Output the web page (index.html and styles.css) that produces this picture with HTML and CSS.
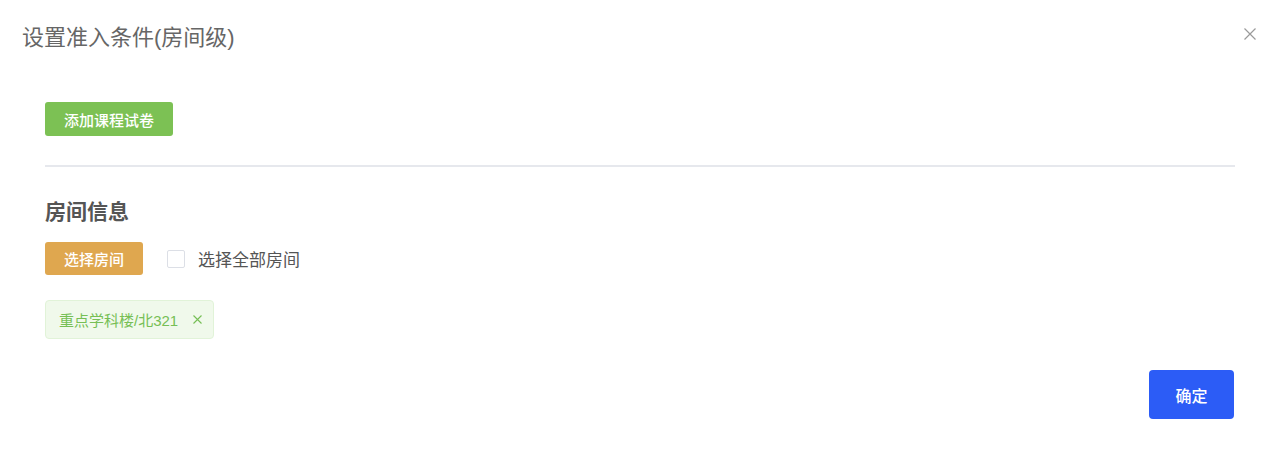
FILE: index.html
```html
<!DOCTYPE html>
<html lang="zh-CN">
<head>
    <meta charset="UTF-8">
    <meta name="viewport" content="width=device-width, initial-scale=1.0">
    <title>设置准入条件</title>
    <link rel="stylesheet" href="styles.css">
</head>
<body>
    <div class="dialog">
        <div class="dialog-header">
            <span class="dialog-title">设置准入条件(房间级)</span>
            <button class="dialog-close" aria-label="关闭">
                <svg width="12" height="12" viewBox="0 0 12 12">
                    <path d="M0.5 0.5 L11.5 11.5 M11.5 0.5 L0.5 11.5" stroke="#9a9a9a" stroke-width="1.2" fill="none"/>
                </svg>
            </button>
        </div>

        <div class="dialog-body">
            <button class="btn btn-green">添加课程试卷</button>
            <div class="divider"></div>

            <h3 class="section-title">房间信息</h3>
            <div class="room-actions">
                <button class="btn btn-orange">选择房间</button>
                <label class="check">
                    <span class="check-box"></span>
                    <span class="check-label">选择全部房间</span>
                </label>
            </div>

            <div class="tags">
                <span class="tag">
                    重点学科楼/北321
                    <svg class="tag-close" width="9" height="9" viewBox="0 0 9 9">
                        <path d="M0.5 0.5 L8.5 8.5 M8.5 0.5 L0.5 8.5" stroke="#76bf55" stroke-width="1.1" fill="none"/>
                    </svg>
                </span>
            </div>
        </div>

        <div class="dialog-footer">
            <button class="btn btn-primary">确定</button>
        </div>
    </div>
</body>
</html>
```

FILE: styles.css
```css
body {
    margin: 0;
    background: #fff;
    font-family: "Liberation Sans", "Noto Sans CJK SC", sans-serif;
    color: #555;
}

.dialog {
    position: relative;
    width: 1280px;
    height: 451px;
    background: #fff;
}

.dialog-header {
    padding: 20px 22px 0;
    height: 36px;
}

.dialog-title {
    font-size: 22px;
    line-height: 36px;
    color: #666;
    font-weight: 400;
}

.dialog-close {
    position: absolute;
    top: 28px;
    right: 24px;
    width: 12px;
    height: 12px;
    padding: 0;
    border: none;
    background: none;
    cursor: pointer;
}

.dialog-close svg {
    display: block;
}

.dialog-body {
    padding: 0 45px;
}

.btn {
    border: none;
    border-radius: 3px;
    color: #fff;
    font-family: inherit;
    font-size: 15px;
    font-weight: 500;
    cursor: pointer;
    padding: 0 19px;
}

.btn-green {
    margin-top: 46px;
    height: 34px;
    background-color: #7cc154;
}

.btn-orange {
    height: 33px;
    background-color: #dfa74f;
}

.btn-primary {
    width: 85px;
    height: 49px;
    padding: 0;
    border-radius: 4px;
    font-size: 16px;
    background-color: #2c5cf6;
}

.divider {
    margin-top: 29px;
    height: 2px;
    background: #e6e8ed;
}

.section-title {
    margin: 31px 0 0;
    font-size: 21px;
    line-height: 28px;
    font-weight: 700;
    color: #555;
}

.room-actions {
    display: flex;
    align-items: center;
    margin-top: 16px;
}

.check {
    display: flex;
    align-items: center;
    margin-left: 24px;
    cursor: pointer;
}

.check-box {
    width: 16px;
    height: 16px;
    border: 1px solid #dcdfe6;
    border-radius: 2px;
    background: #fff;
}

.check-label {
    margin-left: 13px;
    font-size: 17px;
    color: #555;
}

.tags {
    margin-top: 25px;
    display: flex;
}

.tag {
    display: inline-flex;
    align-items: center;
    height: 37px;
    padding: 0 11px 0 13px;
    background: #f0f9eb;
    border: 1px solid #e1f3d8;
    border-radius: 4px;
    color: #76bf55;
    font-size: 15px;
}

.tag-close {
    display: block;
    margin-left: 15px;
    cursor: pointer;
}

.dialog-footer {
    display: flex;
    justify-content: flex-end;
    padding: 31px 46px 0;
}
```
